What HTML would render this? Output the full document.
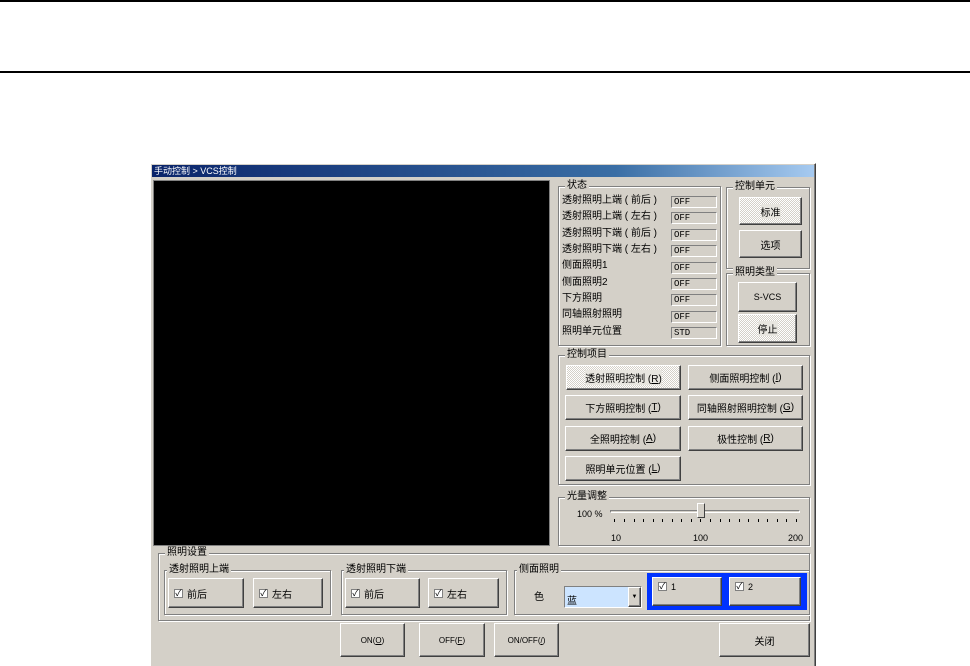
<!DOCTYPE html>
<html><head><meta charset="utf-8"><style>
*{margin:0;padding:0;box-sizing:border-box}
body{width:970px;height:666px;background:#fff;position:relative;overflow:hidden;font-family:"Liberation Sans","Noto Sans CJK SC","WenQuanYi Zen Hei",sans-serif;font-size:10px;color:#000}
.a{position:absolute}
.dlg{left:150px;top:163px;width:666px;height:503px;background:#d4d0c8;border:1px solid #fff;border-right-color:#404040;border-bottom:none;box-shadow:inset -1px 0 #808080}
.title{left:152px;top:165px;width:662px;height:12px;background:linear-gradient(90deg,#0a246a,#3a6ea5 70%,#a6caf0);color:#fff;font-size:9px;line-height:12px;padding-left:2px}
.grp{position:absolute;border:1px solid #808080;box-shadow:1px 1px 0 #fff,inset 1px 1px 0 #fff}
.grp>.lb{position:absolute;top:-7px;left:6px;background:#d4d0c8;padding:0 2px;font-size:10px;line-height:12px}
.btn{position:absolute;background:#d4d0c8;border:1px solid #fff;border-right-color:#404040;border-bottom-color:#404040;box-shadow:inset -1px -1px 0 #808080;display:flex;align-items:center;justify-content:center;font-size:10px}
.dot{background:repeating-conic-gradient(#d4d0c8 0 25%,#fff 0 50%) 0 0/2px 2px}
.dot span{background:#e8e6e0}
.val{position:absolute;left:671px;width:46px;height:12px;border:1px solid #808080;border-right-color:#fff;border-bottom-color:#fff;font-family:"Liberation Mono",monospace;font-size:9px;line-height:10px;padding-left:2px}
.row{position:absolute;left:562px;font-size:10px;line-height:12px}
.cb{justify-content:flex-start;padding-left:5px}
.cb i{display:inline-block;width:9px;height:9px;border:1px solid #808080;background:#fff;margin-right:4px;font-style:normal;font-size:9px;line-height:7px;text-align:center}
.tick{position:absolute;top:519px;width:1px;height:3px;background:#000}
</style></head><body>
<div class="a" style="left:0;top:0;width:970px;height:2px;background:#000"></div>
<div class="a" style="left:0;top:71px;width:970px;height:2px;background:#000"></div>

<div class="a dlg"></div>
<div class="a title">手动控制 &gt; VCS控制</div>
<div class="a" style="left:153px;top:180px;width:397px;height:366px;background:#000;border:1px solid #808080"></div>

<div class="grp" style="left:558px;top:186px;width:163px;height:160px"><div class="lb">状态</div></div>
<div class="row" style="top:195px">透射照明上端 ( 前后 )</div><div class="val" style="top:196px">OFF</div>
<div class="row" style="top:211px">透射照明上端 ( 左右 )</div><div class="val" style="top:212px">OFF</div>
<div class="row" style="top:228px">透射照明下端 ( 前后 )</div><div class="val" style="top:229px">OFF</div>
<div class="row" style="top:244px">透射照明下端 ( 左右 )</div><div class="val" style="top:245px">OFF</div>
<div class="row" style="top:260px">侧面照明1</div><div class="val" style="top:262px">OFF</div>
<div class="row" style="top:277px">侧面照明2</div><div class="val" style="top:278px">OFF</div>
<div class="row" style="top:293px">下方照明</div><div class="val" style="top:294px">OFF</div>
<div class="row" style="top:309px">同轴照射照明</div><div class="val" style="top:311px">OFF</div>
<div class="row" style="top:326px">照明单元位置</div><div class="val" style="top:327px">STD</div>

<div class="grp" style="left:726px;top:187px;width:84px;height:82px"><div class="lb">控制单元</div></div>
<div class="btn dot" style="left:739px;top:197px;width:63px;height:28px"><span>标准</span></div>
<div class="btn" style="left:739px;top:230px;width:63px;height:28px">选项</div>
<div class="grp" style="left:726px;top:273px;width:84px;height:73px"><div class="lb">照明类型</div></div>
<div class="btn" style="left:738px;top:282px;width:59px;height:30px;font-size:9px">S-VCS</div>
<div class="btn dot" style="left:738px;top:314px;width:59px;height:29px"><span>停止</span></div>

<div class="grp" style="left:558px;top:355px;width:252px;height:130px"><div class="lb">控制项目</div></div>
<div class="btn dot" style="left:566px;top:365px;width:115px;height:25px"><span>透射照明控制 (<u>R</u>)</span></div>
<div class="btn" style="left:688px;top:365px;width:115px;height:25px">侧面照明控制 (<u>I</u>)</div>
<div class="btn" style="left:565px;top:395px;width:116px;height:25px">下方照明控制 (<u>T</u>)</div>
<div class="btn" style="left:688px;top:395px;width:115px;height:25px">同轴照射照明控制 (<u>G</u>)</div>
<div class="btn" style="left:565px;top:426px;width:116px;height:25px">全照明控制 (<u>A</u>)</div>
<div class="btn" style="left:688px;top:426px;width:115px;height:25px">极性控制 (<u>R</u>)</div>
<div class="btn" style="left:565px;top:456px;width:116px;height:25px">照明单元位置 (<u>L</u>)</div>

<div class="grp" style="left:558px;top:497px;width:252px;height:49px"><div class="lb">光量调整</div></div>
<div class="a" style="left:577px;top:509px;font-size:9px">100 %</div>
<div class="a" style="left:610px;top:510px;width:190px;height:3px;border:1px solid #808080;border-right-color:#fff;border-bottom-color:#fff;background:#d4d0c8"></div>
<div class="a" style="left:697px;top:503px;width:8px;height:15px;background:#d4d0c8;border:1px solid #fff;border-right-color:#404040;border-bottom-color:#404040"></div>
<div class="tick" style="left:614px"></div><div class="tick" style="left:624px"></div><div class="tick" style="left:634px"></div><div class="tick" style="left:643px"></div><div class="tick" style="left:653px"></div><div class="tick" style="left:662px"></div><div class="tick" style="left:672px"></div><div class="tick" style="left:681px"></div><div class="tick" style="left:691px"></div><div class="tick" style="left:700px"></div><div class="tick" style="left:710px"></div><div class="tick" style="left:720px"></div><div class="tick" style="left:729px"></div><div class="tick" style="left:739px"></div><div class="tick" style="left:748px"></div><div class="tick" style="left:758px"></div><div class="tick" style="left:767px"></div><div class="tick" style="left:777px"></div><div class="tick" style="left:786px"></div><div class="tick" style="left:796px"></div>
<div class="a" style="left:611px;top:533px;font-size:9px">10</div>
<div class="a" style="left:693px;top:533px;font-size:9px">100</div>
<div class="a" style="left:788px;top:533px;font-size:9px">200</div>

<div class="grp" style="left:158px;top:553px;width:652px;height:68px"><div class="lb">照明设置</div></div>
<div class="grp" style="left:164px;top:570px;width:167px;height:45px"><div class="lb" style="left:2px">透射照明上端</div></div>
<div class="btn cb" style="left:168px;top:578px;width:76px;height:30px"><i>✓</i>前后</div>
<div class="btn cb" style="left:253px;top:578px;width:70px;height:30px"><i>✓</i>左右</div>
<div class="grp" style="left:341px;top:570px;width:166px;height:45px"><div class="lb" style="left:2px">透射照明下端</div></div>
<div class="btn cb" style="left:345px;top:578px;width:75px;height:30px"><i>✓</i>前后</div>
<div class="btn cb" style="left:428px;top:578px;width:71px;height:30px"><i>✓</i>左右</div>
<div class="grp" style="left:514px;top:570px;width:296px;height:45px"><div class="lb" style="left:2px">侧面照明</div></div>
<div class="a" style="left:534px;top:588px;font-size:10px">色</div>
<div class="a" style="left:564px;top:586px;width:78px;height:22px;border:1px solid #808080;border-right-color:#fff;border-bottom-color:#fff;background:#cce4ff;font-size:10px;padding:5px 0 0 2px">蓝</div>
<div class="btn" style="left:628px;top:587px;width:13px;height:20px;font-size:6px">▼</div>
<div class="a" style="left:647px;top:573px;width:160px;height:37px;background:#0033ff"></div>
<div class="btn cb" style="left:652px;top:577px;width:70px;height:29px;align-items:flex-start;padding-top:4px;font-size:9px"><i>✓</i>1</div>
<div class="btn cb" style="left:729px;top:577px;width:72px;height:29px;align-items:flex-start;padding-top:4px;font-size:9px"><i>✓</i>2</div>

<div class="btn" style="left:340px;top:623px;width:65px;height:34px;font-size:8px">ON(<u>O</u>)</div>
<div class="btn" style="left:419px;top:623px;width:66px;height:34px;font-size:8px">OFF(<u>F</u>)</div>
<div class="btn" style="left:494px;top:623px;width:65px;height:34px;font-size:8px">ON/OFF(<u>/</u>)</div>
<div class="btn" style="left:719px;top:623px;width:91px;height:34px">关闭</div>
</body></html>
